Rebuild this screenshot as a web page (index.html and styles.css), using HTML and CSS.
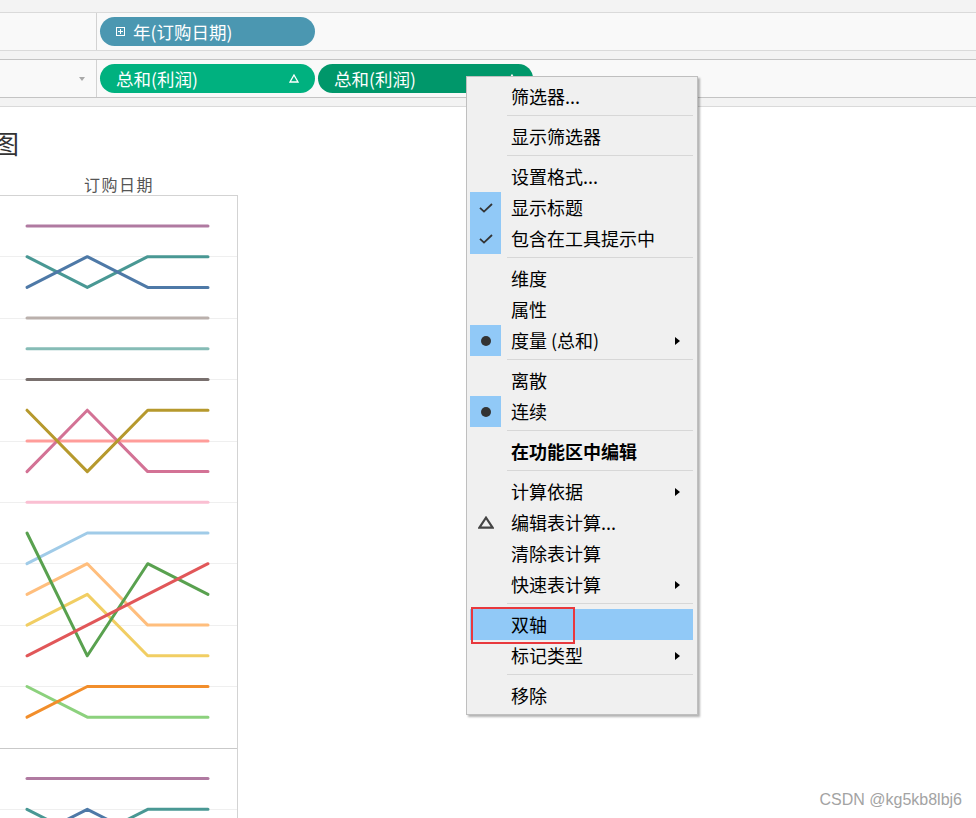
FILE: index.html
```html
<!DOCTYPE html>
<html lang="zh-CN">
<head>
<meta charset="utf-8">
<title>Tableau</title>
<link rel="stylesheet" href="styles.css">
</head>
<body>
<div class="page">
  <div class="strip strip-light"></div>
  <div class="shelf shelf-cols">
    <div class="shelf-label"></div>
    <div class="shelf-pills">
      <div class="pill pill-blue">
        <svg class="pill-plus" width="9" height="9" viewBox="0 0 9 9"><rect x="0.5" y="0.5" width="8" height="8" fill="none" stroke="#fff" stroke-width="1"/><path d="M2 4.5H7M4.5 2V7" stroke="#fff" stroke-width="1"/></svg>
        <span>年(订购日期)</span>
      </div>
    </div>
  </div>
  <div class="strip strip-dark"></div>
  <div class="shelf shelf-rows">
    <div class="shelf-label"><span class="dd-arrow"></span></div>
    <div class="shelf-pills">
      <div class="pill pill-green">
        <span>总和(利润)</span>
        <svg class="pill-delta" width="10" height="9" viewBox="0 0 10 9"><polygon points="5,1 9,8 1,8" fill="none" stroke="#fff" stroke-width="1.3" stroke-linejoin="miter"/></svg>
      </div>
      <div class="pill pill-dkgreen">
        <span>总和(利润)</span>
        <svg class="pill-delta" width="10" height="9" viewBox="0 0 10 9"><polygon points="5,1 9,8 1,8" fill="none" stroke="#fff" stroke-width="1.3"/></svg>
      </div>
    </div>
  </div>
  <div class="strip strip-bottom"></div>

  <div class="viz">
    <div class="viz-title">图</div>
    <div class="col-header">订购日期</div>
    <div class="pane">
      <svg class="chart" width="237" height="622" viewBox="0 0 237 622">
        <g class="grid">
          <line x1="0" x2="237" y1="60.5" y2="60.5"/>
          <line x1="0" x2="237" y1="122.5" y2="122.5"/>
          <line x1="0" x2="237" y1="183.5" y2="183.5"/>
          <line x1="0" x2="237" y1="245.5" y2="245.5"/>
          <line x1="0" x2="237" y1="306.5" y2="306.5"/>
          <line x1="0" x2="237" y1="367.5" y2="367.5"/>
          <line x1="0" x2="237" y1="429.5" y2="429.5"/>
          <line x1="0" x2="237" y1="490.5" y2="490.5"/>
          <line x1="0" x2="237" y1="613.5" y2="613.5"/>
        </g>
        <line class="panel-sep" x1="0" x2="237" y1="552.5" y2="552.5"/>
        <g class="ln">
          <polyline stroke="#b07aa1" points="27,30 208,30"/>
          <polyline stroke="#499894" points="27,60.7 87.3,91.4 147.7,60.7 208,60.7"/>
          <polyline stroke="#4e79a7" points="27,91.4 87.3,60.7 147.7,91.4 208,91.4"/>
          <polyline stroke="#bab0ac" points="27,122.1 208,122.1"/>
          <polyline stroke="#86bcb6" points="27,152.8 208,152.8"/>
          <polyline stroke="#79706e" points="27,183.5 208,183.5"/>
          <polyline stroke="#ff9d9a" points="27,244.9 208,244.9"/>
          <polyline stroke="#d37295" points="27,275.6 87.3,214.2 147.7,275.6 208,275.6"/>
          <polyline stroke="#b6992d" points="27,214.2 87.3,275.6 147.7,214.2 208,214.2"/>
          <polyline stroke="#fabfd2" points="27,306.3 208,306.3"/>
          <polyline stroke="#a0cbe8" points="27,367.7 87.3,337 147.7,337 208,337"/>
          <polyline stroke="#ffbe7d" points="27,398.4 87.3,367.7 147.7,429.1 208,429.1"/>
          <polyline stroke="#f1ce63" points="27,429.1 87.3,398.4 147.7,459.8 208,459.8"/>
          <polyline stroke="#59a14f" points="27,337 87.3,459.8 147.7,367.7 208,398.4"/>
          <polyline stroke="#e15759" points="27,459.8 208,367.7"/>
          <polyline stroke="#8cd17d" points="27,490.5 87.3,521.2 147.7,521.2 208,521.2"/>
          <polyline stroke="#f28e2b" points="27,521.2 87.3,490.5 147.7,490.5 208,490.5"/>
          <polyline stroke="#b07aa1" points="27,582.6 208,582.6"/>
          <polyline stroke="#499894" points="27,613.3 87.3,644 147.7,613.3 208,613.3"/>
          <polyline stroke="#4e79a7" points="27,644 87.3,613.3 147.7,644 208,644"/>
        </g>
      </svg>
    </div>
  </div>
</div>

<div class="menu">
  <div class="mi"><span class="mi-ico"></span><span class="mi-text">筛选器...</span></div>
  <div class="sep"></div>
  <div class="mi"><span class="mi-ico"></span><span class="mi-text">显示筛选器</span></div>
  <div class="sep"></div>
  <div class="mi"><span class="mi-ico"></span><span class="mi-text">设置格式...</span></div>
  <div class="mi"><span class="mi-ico on"><svg width="14" height="10" viewBox="0 0 14 10"><path d="M1 4.8L5 8.6L13 1" fill="none" stroke="#333" stroke-width="1.8"/></svg></span><span class="mi-text">显示标题</span></div>
  <div class="mi"><span class="mi-ico on"><svg width="14" height="10" viewBox="0 0 14 10"><path d="M1 4.8L5 8.6L13 1" fill="none" stroke="#333" stroke-width="1.8"/></svg></span><span class="mi-text">包含在工具提示中</span></div>
  <div class="sep"></div>
  <div class="mi"><span class="mi-ico"></span><span class="mi-text">维度</span></div>
  <div class="mi"><span class="mi-ico"></span><span class="mi-text">属性</span></div>
  <div class="mi"><span class="mi-ico on"><span class="dot"></span></span><span class="mi-text">度量 (总和)</span><span class="mi-arrow"></span></div>
  <div class="sep"></div>
  <div class="mi"><span class="mi-ico"></span><span class="mi-text">离散</span></div>
  <div class="mi"><span class="mi-ico on"><span class="dot"></span></span><span class="mi-text">连续</span></div>
  <div class="sep"></div>
  <div class="mi"><span class="mi-ico"></span><span class="mi-text bold">在功能区中编辑</span></div>
  <div class="sep"></div>
  <div class="mi"><span class="mi-ico"></span><span class="mi-text">计算依据</span><span class="mi-arrow"></span></div>
  <div class="mi"><span class="mi-ico"><svg width="16" height="13" viewBox="0 0 16 13"><polygon points="8,1.6 14.6,11.6 1.4,11.6" fill="none" stroke="#444" stroke-width="2.1"/></svg></span><span class="mi-text">编辑表计算...</span></div>
  <div class="mi"><span class="mi-ico"></span><span class="mi-text">清除表计算</span></div>
  <div class="mi"><span class="mi-ico"></span><span class="mi-text">快速表计算</span><span class="mi-arrow"></span></div>
  <div class="sep"></div>
  <div class="mi hover"><span class="mi-ico"></span><span class="mi-text">双轴</span></div>
  <div class="mi"><span class="mi-ico"></span><span class="mi-text">标记类型</span><span class="mi-arrow"></span></div>
  <div class="sep"></div>
  <div class="mi"><span class="mi-ico"></span><span class="mi-text">移除</span></div>
  <div class="redbox"></div>
</div>

<div class="watermark">CSDN @kg5kb8lbj6</div>
</body>
</html>
```

FILE: styles.css
```css
* { box-sizing: border-box; }

html, body {
  margin: 0;
  padding: 0;
}

body {
  width: 976px;
  height: 818px;
  overflow: hidden;
  position: relative;
  background: #ffffff;
  font-family: "Noto Sans CJK SC", "Noto Sans", "Liberation Sans", sans-serif;
  color: #000;
}

.page {
  display: flex;
  flex-direction: column;
  height: 818px;
  overflow: hidden;
}

/* header strips & shelves */
.strip {
  height: 13px;
  flex: none;
  background: #f3f3f3;
  border-bottom: 1px solid #dadada;
}
.strip-dark {
  height: 9px;
  border-bottom-color: #c4c4c4;
}
.strip-bottom {
  height: 9px;
  border-bottom-color: #dadada;
}

.shelf {
  height: 38px;
  flex: none;
  display: flex;
  background: #f9f9f9;
}
.shelf-cols {
  border-bottom: 1px solid #dadada;
}
.shelf-rows {
  border-bottom: 1px solid #c4c4c4;
}

.shelf-label {
  width: 97px;
  border-right: 1px solid #d2d2d2;
  display: flex;
  align-items: center;
  justify-content: flex-end;
  padding-right: 11px;
}

.dd-arrow {
  width: 0;
  height: 0;
  border-left: 3.5px solid transparent;
  border-right: 3.5px solid transparent;
  border-top: 4px solid #a9a9a9;
  margin-top: 1px;
}

.shelf-pills {
  display: flex;
  align-items: center;
  gap: 3px;
  padding-left: 3px;
}

.pill {
  width: 215px;
  height: 29px;
  border-radius: 15px;
  display: flex;
  align-items: center;
  padding: 0 16px;
  color: #ffffff;
  font-size: 17.5px;
  line-height: 29px;
  white-space: nowrap;
}
.pill-blue {
  background: #4b97b1;
  gap: 8px;
}
.pill-green {
  background: #00b17f;
  justify-content: space-between;
}
.pill-dkgreen {
  background: #00976a;
  justify-content: space-between;
}
.pill-plus {
  display: block;
  flex: none;
}
.pill-delta {
  display: block;
  flex: none;
}

/* viz */
.viz {
  width: 238px;
  flex: none;
  display: flex;
  flex-direction: column;
}
.viz-title {
  margin-top: 20px;
  margin-left: -7px;
  height: 32px;
  font-size: 26px;
  line-height: 32px;
  color: #333333;
}
.col-header {
  height: 36px;
  padding-top: 15px;
  font-size: 16px;
  line-height: 20px;
  letter-spacing: 1.5px;
  color: #555555;
  text-align: center;
}
.pane {
  border-top: 1px solid #d3d3d3;
  border-right: 1px solid #d3d3d3;
  height: 623px;
  overflow: hidden;
}
.chart {
  display: block;
}
.grid line {
  stroke: #efefef;
  stroke-width: 1;
}
.panel-sep {
  stroke: #c9c9c9;
  stroke-width: 1;
}
.ln polyline {
  fill: none;
  stroke-width: 3;
  stroke-linecap: round;
  stroke-linejoin: round;
}

/* context menu (overlay) */
.menu {
  position: absolute;
  left: 466px;
  top: 76px;
  width: 232px;
  background: #f0f0f0;
  border: 1px solid #bfbfbf;
  box-shadow: 2px 2px 2px rgba(0, 0, 0, 0.3);
  padding: 4px 4px 3px 3px;
  font-size: 18px;
}
.mi {
  height: 31px;
  display: flex;
  align-items: center;
  white-space: nowrap;
}
.mi.hover {
  background: #91c9f7;
}
.mi-ico {
  width: 31px;
  height: 31px;
  flex: none;
  display: flex;
  align-items: center;
  justify-content: center;
}
.mi-ico.on {
  background: #91c9f7;
}
.mi-ico svg {
  display: block;
}
.dot {
  width: 10px;
  height: 10px;
  border-radius: 50%;
  background: #333333;
}
.mi-text {
  margin-left: 10px;
  line-height: 31px;
}
.mi-text.bold {
  font-weight: bold;
}
.mi-arrow {
  margin-left: auto;
  margin-right: 13px;
  width: 0;
  height: 0;
  border-top: 4.5px solid transparent;
  border-bottom: 4.5px solid transparent;
  border-left: 5px solid #000000;
}
.sep {
  height: 1px;
  background: #d7d7d7;
  margin: 3px 0 5px 37px;
}
.redbox {
  position: absolute;
  left: 4px;
  top: 530px;
  width: 104px;
  height: 37px;
  border: 2px solid #e8383d;
}

.watermark {
  position: absolute;
  right: 14px;
  bottom: 9px;
  font-family: "Liberation Sans", Arial, sans-serif;
  font-size: 16px;
  line-height: 18px;
  color: #a3a3a3;
}
```
